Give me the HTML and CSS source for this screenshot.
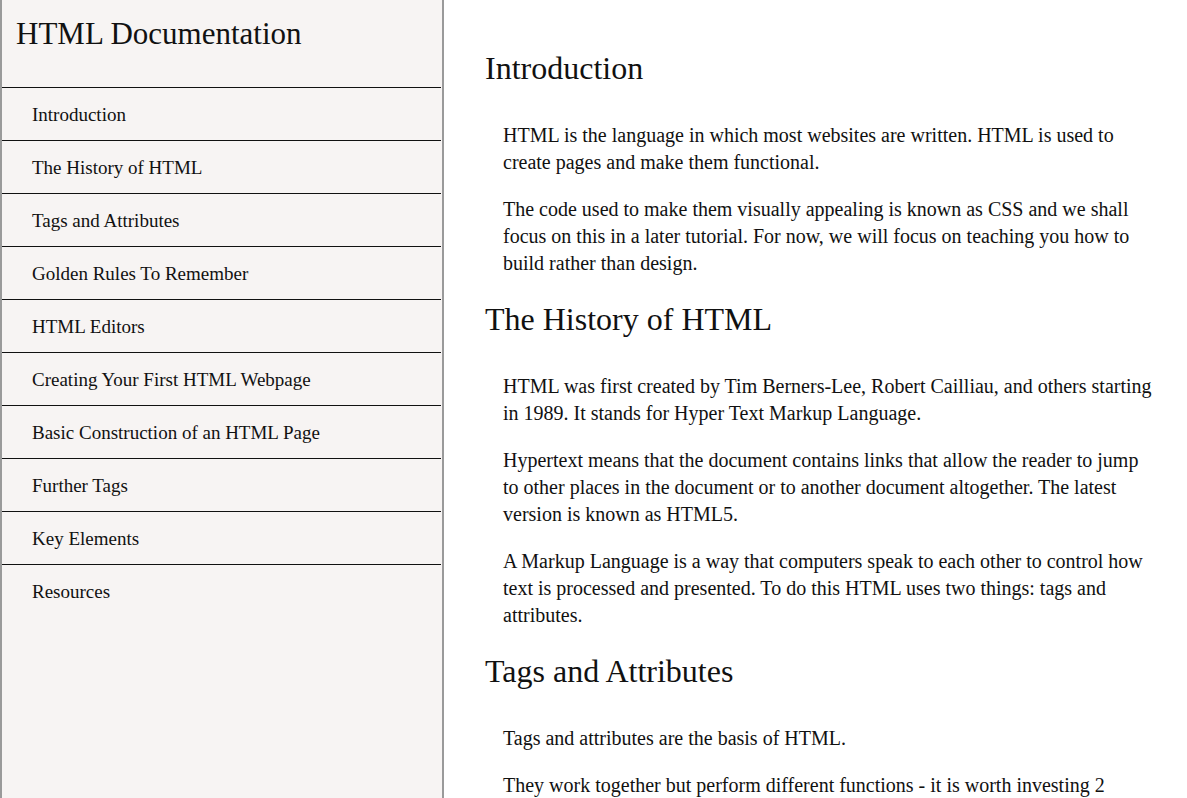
FILE: index.html
```html
<!DOCTYPE html>
<html lang="en">
<head>
<meta charset="utf-8">
<title>HTML Documentation</title>
<link rel="stylesheet" href="styles.css">
</head>
<body>
<div class="page">
  <nav id="navbar" class="navbar">
    <header class="nav-title">HTML Documentation</header>
    <ul class="nav-list">
      <li class="nav-item"><a class="nav-link" href="#Introduction">Introduction</a></li>
      <li class="nav-item"><a class="nav-link" href="#The_History_of_HTML">The History of HTML</a></li>
      <li class="nav-item"><a class="nav-link" href="#Tags_and_Attributes">Tags and Attributes</a></li>
      <li class="nav-item"><a class="nav-link" href="#Golden_Rules_To_Remember">Golden Rules To Remember</a></li>
      <li class="nav-item"><a class="nav-link" href="#HTML_Editors">HTML Editors</a></li>
      <li class="nav-item"><a class="nav-link" href="#Creating_Your_First_HTML_Webpage">Creating Your First HTML Webpage</a></li>
      <li class="nav-item"><a class="nav-link" href="#Basic_Construction_of_an_HTML_Page">Basic Construction of an HTML Page</a></li>
      <li class="nav-item"><a class="nav-link" href="#Further_Tags">Further Tags</a></li>
      <li class="nav-item"><a class="nav-link" href="#Key_Elements">Key Elements</a></li>
      <li class="nav-item"><a class="nav-link" href="#Resources">Resources</a></li>
    </ul>
  </nav>
  <main id="main-doc" class="main-doc">
    <section class="main-section" id="Introduction">
      <header class="section-title">Introduction</header>
      <p class="text">HTML is the language in which most websites are written. HTML is used to create pages and make them functional.</p>
      <p class="text">The code used to make them visually appealing is known as CSS and we shall focus on this in a later tutorial. For now, we will focus on teaching you how to build rather than design.</p>
    </section>
    <section class="main-section" id="The_History_of_HTML">
      <header class="section-title">The History of HTML</header>
      <p class="text">HTML was first created by Tim Berners-Lee, Robert Cailliau, and others starting in 1989. It stands for Hyper Text Markup Language.</p>
      <p class="text">Hypertext means that the document contains links that allow the reader to jump to other places in the document or to another document altogether. The latest version is known as HTML5.</p>
      <p class="text">A Markup Language is a way that computers speak to each other to control how text is processed and presented. To do this HTML uses two things: tags and attributes.</p>
    </section>
    <section class="main-section" id="Tags_and_Attributes">
      <header class="section-title">Tags and Attributes</header>
      <p class="text">Tags and attributes are the basis of HTML.</p>
      <p class="text">They work together but perform different functions - it is worth investing 2 minutes in differentiating the two.</p>
    </section>
  </main>
</div>
</body>
</html>
```

FILE: styles.css
```css
html, body {
  margin: 0;
  padding: 0;
}

body {
  font-family: "Liberation Serif", "Times New Roman", serif;
  color: #111;
  background: #fff;
}

.page {
  display: flex;
  align-items: flex-start;
}

.navbar {
  box-sizing: border-box;
  flex: 0 0 444px;
  width: 444px;
  height: 100vh;
  background: #f7f4f3;
  border-left: 2px solid #9a9a9a;
  border-right: 2px solid #9a9a9a;
}

.nav-title {
  height: 87px;
  padding: 14px 0 0 14px;
  box-sizing: border-box;
  font-size: 31px;
  line-height: 40px;
}

.nav-list {
  list-style: none;
  margin: 0 1px 0 0;
  padding: 0;
}

.nav-item {
  box-sizing: border-box;
  border-top: 1px solid #111;
  height: 53px;
  display: flex;
  align-items: center;
  padding: 2px 0 0 30px;
}

.nav-link {
  color: #111;
  text-decoration: none;
  font-size: 19px;
}

.main-doc {
  flex: 1;
  padding: 46px 32px 0 41px;
}

.section-title {
  font-size: 32px;
  line-height: 45px;
  margin-bottom: 31px;
}

.text {
  margin: 0 0 20px 18px;
  font-size: 20px;
  line-height: 27px;
}
```
